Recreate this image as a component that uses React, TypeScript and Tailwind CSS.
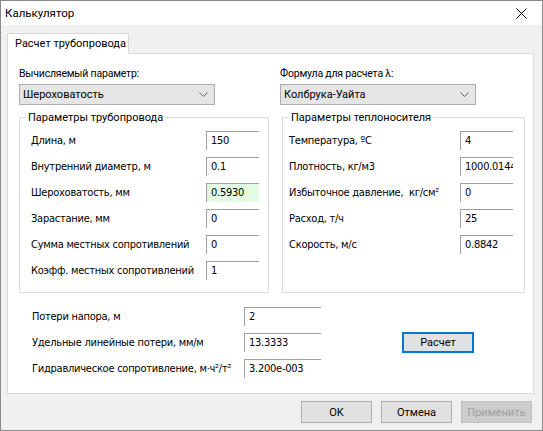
import React from "react";

const SEG = "font-['Roboto','Noto_Sans',sans-serif] text-[11px] leading-[15px]";
const SEGS = "font-['Roboto','Noto_Sans',sans-serif] text-[10.5px] leading-[15px] tracking-[-0.2px]";
const SEG12 = "font-['Roboto','Noto_Sans',sans-serif] text-[11.5px] leading-[15px]";
const TAH =
  "font-['DejaVu_Sans_Condensed','DejaVu_Sans',sans-serif] text-[11px] leading-[14px] tracking-[-0.25px]";

function Edit({ value, green, wide }: { value: string; green?: boolean; wide?: boolean }) {
  return (
    <div
      className={
        (wide ? "w-[77px] " : "w-[53px] ") +
        (green ? "bg-[#e3fbe3] " : "bg-white ") +
        "h-[19px] shrink-0 border-t border-l border-[#a0a0a0] pl-[4px] pt-[2px] overflow-hidden whitespace-nowrap text-black " +
        TAH
      }
    >
      {value}
    </div>
  );
}

function Chevron() {
  return (
    <svg width="9" height="5" viewBox="0 0 9 5" className="shrink-0">
      <polyline points="0.5,0.5 4.5,4.5 8.5,0.5" fill="none" stroke="#606060" strokeWidth="1" />
    </svg>
  );
}

function Combo({ text, w }: { text: string; w: string }) {
  return (
    <div
      className={
        w +
        " mt-[3px] h-[21px] bg-[#e5e5e5] border border-[#adadad] flex items-center justify-between pl-[3px] pr-[6px] text-black whitespace-nowrap " +
        SEG
      }
    >
      <span>{text}</span>
      <Chevron />
    </div>
  );
}

function Row({ label, value, green, lw }: { label: string; value: string; green?: boolean; lw: string }) {
  return (
    <div className="flex items-center h-[19px]">
      <div className={lw + " whitespace-pre text-black " + TAH}>{label}</div>
      <Edit value={value} green={green} />
    </div>
  );
}

function GroupBox({ title, w, pl, children }: { title: string; w: string; pl: string; children: React.ReactNode }) {
  return (
    <div className={w + " relative mt-[12px] h-[176px] border border-[#dcdcdc] pt-[13px] " + pl}>
      <span className={"absolute left-[6px] -top-[8px] bg-white px-[2px] text-black whitespace-nowrap " + SEG}>
        {title}
      </span>
      <div className="flex flex-col gap-[7px]">{children}</div>
    </div>
  );
}

function Btn({ children, disabled }: { children: React.ReactNode; disabled?: boolean }) {
  return (
    <div
      className={
        "w-[71px] h-[22px] flex items-center justify-center border whitespace-nowrap " +
        (disabled ? "bg-[#cccccc] border-[#bfbfbf] text-[#a0a0a0] " : "bg-[#e1e1e1] border-[#adadad] text-black ") +
        SEG
      }
    >
      {children}
    </div>
  );
}

export default function App() {
  return (
    <div className="w-[543px] h-[431px] border border-[#8a8a8a] bg-[#f0f0f0] flex flex-col overflow-hidden">
      {/* title bar */}
      <div className="h-[24px] bg-white flex items-center justify-between pl-[4px] pr-[15px] shrink-0">
        <span className={"text-black " + SEG12}>Калькулятор</span>
        <svg width="11" height="11" viewBox="0 0 11 11">
          <path d="M0.5 0.5 L10.5 10.5 M10.5 0.5 L0.5 10.5" stroke="#000" strokeWidth="1" />
        </svg>
      </div>

      {/* tab header */}
      <div className="mt-[8px] ml-[6px] flex shrink-0">
        <div
          className={
            "relative z-10 -mb-[1px] w-[122px] h-[21px] bg-white border border-b-0 border-[#d9d9d9] pl-[7px] pt-[2px] text-black whitespace-nowrap " +
            SEG
          }
        >
          Расчет трубопровода
        </div>
      </div>

      {/* tab panel */}
      <div className="ml-[6px] w-[527px] h-[341px] shrink-0 bg-white border border-[#d9d9d9] pl-[11px] pt-[12px]">
        <div className="flex">
          <div className="w-[261px] shrink-0">
            <div className={"text-black " + SEGS}>Вычисляемый параметр:</div>
            <Combo text="Шероховатость" w="w-[196px]" />
            <GroupBox title="Параметры трубопровода" w="w-[250px]" pl="pl-[11px]">
              <Row lw="w-[175px]" label="Длина, м" value="150" />
              <Row lw="w-[175px]" label="Внутренний диаметр, м" value="0.1" />
              <Row lw="w-[175px]" label="Шероховатость, мм" value="0.5930" green />
              <Row lw="w-[175px]" label="Зарастание, мм" value="0" />
              <Row lw="w-[175px]" label="Сумма местных сопротивлений" value="0" />
              <Row lw="w-[175px]" label="Коэфф. местных сопротивлений" value="1" />
            </GroupBox>
          </div>
          <div className="w-[245px] shrink-0">
            <div className={"text-black " + SEGS}>Формула для расчета λ:</div>
            <Combo text="Колбрука-Уайта" w="w-[196px]" />
            <div className="pl-[2px]">
              <GroupBox title="Параметры теплоносителя" w="w-[243px]" pl="pl-[6px]">
                <Row lw="w-[171px]" label="Температура, ºC" value="4" />
                <Row lw="w-[171px]" label="Плотность, кг/м3" value="1000.0144" />
                <Row lw="w-[171px]" label="Избыточное давление,  кг/см²" value="0" />
                <Row lw="w-[171px]" label="Расход, т/ч" value="25" />
                <Row lw="w-[171px]" label="Скорость, м/с" value="0.8842" />
              </GroupBox>
            </div>
          </div>
        </div>

        {/* bottom section */}
        <div className="mt-[14px] pl-[13px] flex">
          <div className="flex flex-col gap-[7px]">
            <div className="flex items-center h-[19px]">
              <div className={"w-[212px] text-black " + TAH}>Потери напора, м</div>
              <Edit value="2" wide />
            </div>
            <div className="flex items-center h-[19px]">
              <div className={"w-[212px] text-black " + TAH}>Удельные линейные потери, мм/м</div>
              <Edit value="13.3333" wide />
            </div>
            <div className="flex items-center h-[19px]">
              <div className={"w-[212px] text-black " + TAH}>Гидравлическое сопротивление, м·ч²/т²</div>
              <Edit value="3.200e-003" wide />
            </div>
          </div>
          <div className="ml-[81px] self-center">
            <div
              className={
                "w-[72px] h-[21px] flex items-center justify-center bg-[#e1e1e1] border-2 border-[#0078d7] text-black " +
                SEG
              }
            >
              Расчет
            </div>
          </div>
        </div>
      </div>

      {/* buttons */}
      <div className="mt-[7px] flex justify-end gap-[9px] pr-[10px] shrink-0">
        <Btn>OK</Btn>
        <Btn>Отмена</Btn>
        <Btn disabled>Применить</Btn>
      </div>
    </div>
  );
}
